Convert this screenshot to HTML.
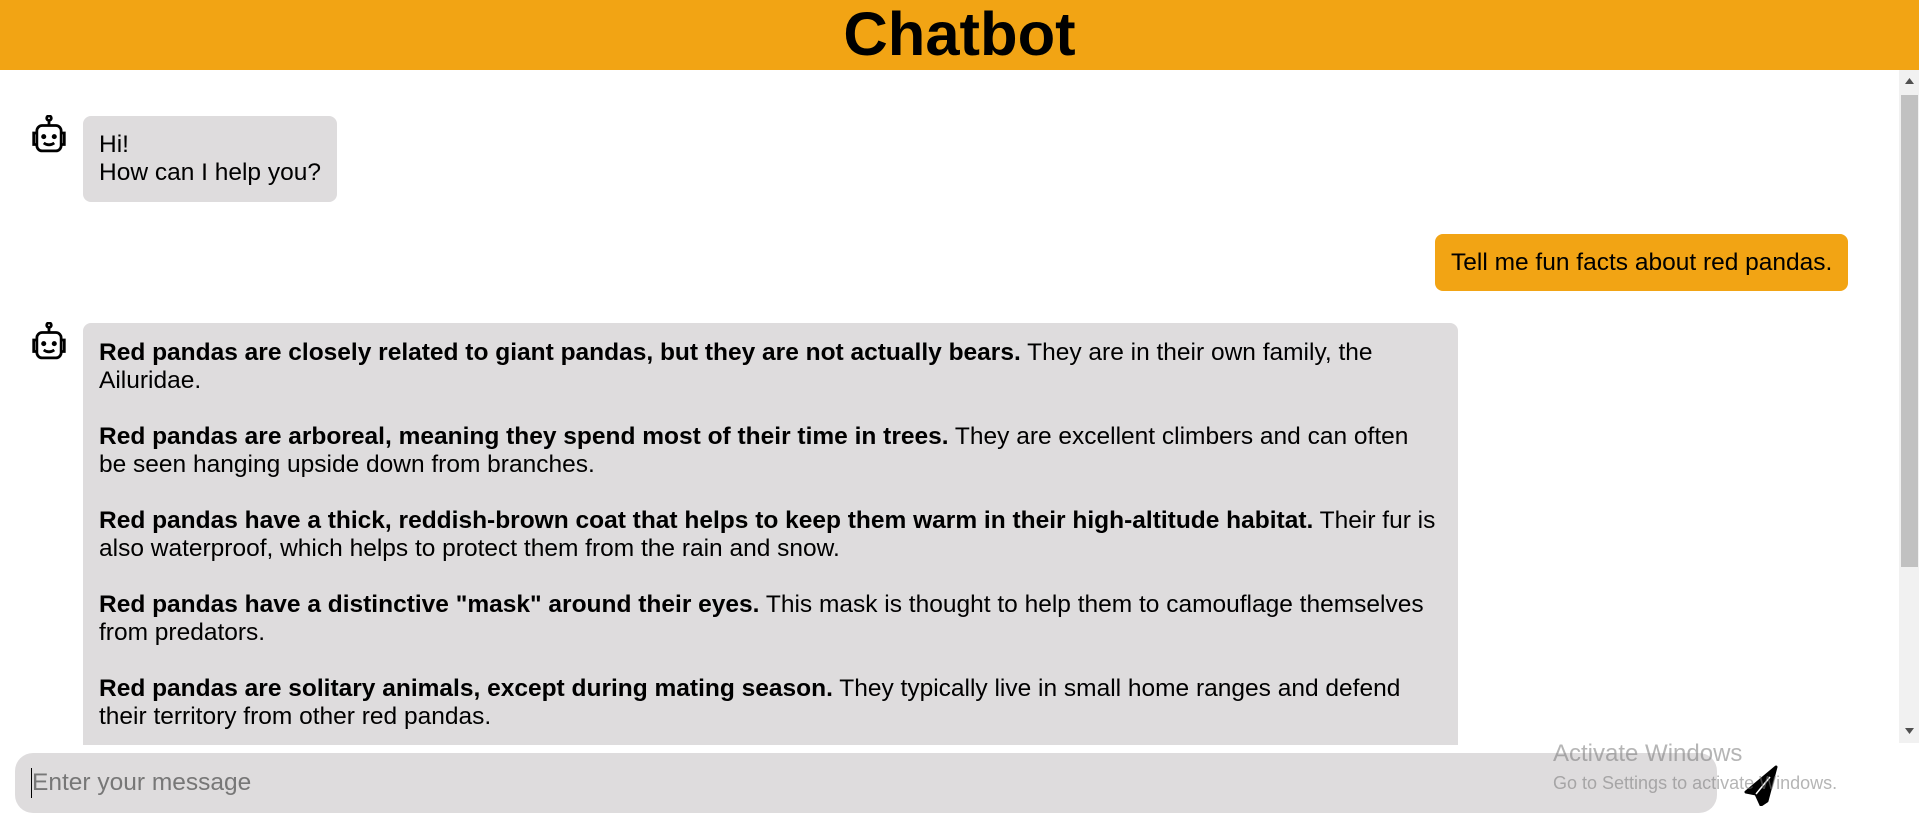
<!DOCTYPE html>
<html><head><meta charset="utf-8"><style>
*{box-sizing:border-box}
body{margin:0;width:1919px;height:840px;overflow:hidden;background:#fff;font-family:"Liberation Sans",Arial,sans-serif;position:relative}
.hdr{position:absolute;left:0;top:0;width:1919px;height:70px;background:#f2a414;text-align:center;font-weight:bold;font-size:61.5px;line-height:70px;color:#000}
.chat{position:absolute;left:0;top:70px;width:1919px;height:675px;overflow:hidden}
.sb{position:absolute;right:0;top:70px;width:20px;height:673px;background:#f1f1f1}
.thumb{position:absolute;left:2px;top:25px;width:17px;height:472px;background:#c1c1c1}
.bub{position:absolute;font-size:24.5px;line-height:28px;padding:15px 16px;border-radius:8px;color:#000}
.bot{background:#dedcdd}
.usr{background:#f2a414;white-space:nowrap}
.ic{position:absolute;left:30px;width:38px;height:38px}
.inp{position:absolute;left:15px;top:753px;width:1702px;height:60px;background:#dedcdd;border-radius:18px;font-size:24.5px;color:#777;line-height:60px;padding-left:17px}
.cur{position:absolute;left:16px;top:15px;width:1px;height:30px;background:#000}
.wm{position:absolute;left:1553px;color:rgba(120,120,120,.55)}
</style></head><body>
<div class="hdr">Chatbot</div>
<div class="chat">
<svg class="ic" style="top:45px" viewBox="0 0 36 36" fill="none" stroke="#000" stroke-width="2.6"><circle cx="18" cy="3" r="2.2"/><path d="M18 5.2v4.5"/><rect x="6.5" y="10" width="23" height="24" rx="5"/><path d="M6.5 17H3.5v11h3M29.5 17h3v11h-3"/><circle cx="13" cy="20.5" r="1.1" fill="#000"/><circle cx="23" cy="20.5" r="1.1" fill="#000"/><path d="M13 26.5q5 3.5 10 0"/></svg>
<div class="bub bot" style="left:83px;top:46px;">Hi!<br>How can I help you?</div>
<div class="bub usr" style="left:1435px;top:164px;width:413px;height:57px;padding-top:15px">Tell me fun facts about red pandas.</div>
<svg class="ic" style="top:252px" viewBox="0 0 36 36" fill="none" stroke="#000" stroke-width="2.6"><circle cx="18" cy="3" r="2.2"/><path d="M18 5.2v4.5"/><rect x="6.5" y="10" width="23" height="24" rx="5"/><path d="M6.5 17H3.5v11h3M29.5 17h3v11h-3"/><circle cx="13" cy="20.5" r="1.1" fill="#000"/><circle cx="23" cy="20.5" r="1.1" fill="#000"/><path d="M13 26.5q5 3.5 10 0"/></svg>
<div class="bub bot" style="left:83px;top:253px;width:1375px;padding-top:16px;padding-bottom:40px"><b>Red pandas are closely related to giant pandas, but they are not actually bears.</b> They are in their own family, the Ailuridae.<br><br><b>Red pandas are arboreal, meaning they spend most of their time in trees.</b> They are excellent climbers and can often<br>be seen hanging upside down from branches.<br><br><b>Red pandas have a thick, reddish-brown coat that helps to keep them warm in their high-altitude habitat.</b> Their fur is also waterproof, which helps to protect them from the rain and snow.<br><br><b>Red pandas have a distinctive "mask" around their eyes.</b> This mask is thought to help them to camouflage themselves from predators.<br><br><b>Red pandas are solitary animals, except during mating season.</b> They typically live in small home ranges and defend<br>their territory from other red pandas.<br><br>More text</div>
</div>
<div class="sb"><div class="thumb"></div>
<svg style="position:absolute;left:6px;top:8px" width="9" height="6"><path d="M0 6L4.5 0L9 6Z" fill="#505050"/></svg>
<svg style="position:absolute;left:6px;top:658px" width="9" height="6"><path d="M0 0L4.5 6L9 0Z" fill="#505050"/></svg></div>
<div class="inp"><div class="cur"></div>Enter your message</div>
<svg style="position:absolute;left:1743px;top:764px" width="36" height="42" viewBox="0 0 36 42"><path d="M33 3L3 28l10 2 5 11 6-4z" fill="#000" stroke="#000" stroke-width="3" stroke-linejoin="round"/><path d="M13 30L27 13" stroke="#fff" stroke-width="1.5"/></svg>
<div class="wm" style="top:740px;font-size:24px">Activate Windows</div>
<div class="wm" style="top:773px;font-size:18px">Go to Settings to activate Windows.</div>
</body></html>
